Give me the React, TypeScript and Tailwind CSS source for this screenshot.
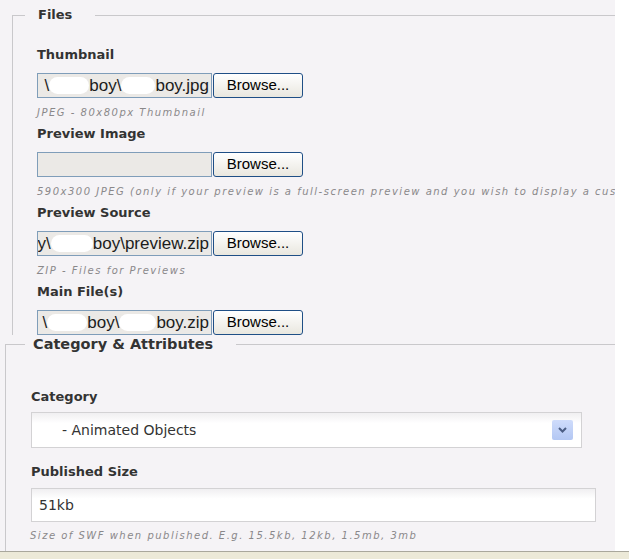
const label = "font-['DejaVu_Sans',sans-serif] font-bold text-[13px] leading-[18px] text-[#333333]";
const hint =
  "font-['DejaVu_Sans',sans-serif] italic text-[10px] leading-[14px] tracking-[1.5px] text-[#8a888a] whitespace-nowrap";

function Blob({ w }: { w: string }) {
  return <span className={`inline-block shrink-0 h-[17px] bg-white rounded-full ${w}`} />;
}

function FileRow({ children }: { children: React.ReactNode }) {
  return (
    <div className="flex h-[25px]">
      <div className="w-[175px] h-[25px] border border-[#7f9db9] bg-[#ebe9e6] overflow-hidden flex justify-end items-center whitespace-nowrap pr-[2px] font-['Liberation_Sans',sans-serif] text-[17px] text-[#1c1c1c]">
        {children}
      </div>
      <button className="w-[90px] h-[25px] ml-[1px] rounded-[3px] border border-[#1f4f86] bg-linear-to-b from-white to-[#e9e7df] font-['Liberation_Sans',sans-serif] text-[15px] text-black">
        Browse...
      </button>
    </div>
  );
}

function FileField({
  title,
  note,
  first,
  children,
}: {
  title: string;
  note?: string;
  first?: boolean;
  children?: React.ReactNode;
}) {
  return (
    <div className={first ? "" : "mt-[5px]"}>
      <div className={`${label} mb-[9px]`}>{title}</div>
      <FileRow>{children}</FileRow>
      {note && <div className={`${hint} mt-[8px]`}>{note}</div>}
    </div>
  );
}

export default function App() {
  return (
    <div className="w-[629px] h-[559px] bg-white flex flex-col overflow-hidden">
      <div className="h-[551px] w-[615px] bg-[#f5f3f6] overflow-hidden">
        <fieldset className="ml-[12px] mt-[6px] border-t border-l border-[#c9c8cb] pl-[24px] pb-0">
          <legend className={`${label} -ml-[12px] pl-[13px] pr-[23px]`}>Files</legend>
          <div className="pt-[22px]">
            <FileField title="Thumbnail" note="JPEG - 80x80px Thumbnail" first>
              <span>\</span>
              <Blob w="w-[40px]" />
              <span>boy\</span>
              <Blob w="w-[34px]" />
              <span>boy.jpg</span>
            </FileField>
            <FileField
              title="Preview Image"
              note="590x300 JPEG (only if your preview is a full-screen preview and you wish to display a custom image)"
            />
            <FileField title="Preview Source" note="ZIP - Files for Previews">
              <span className="shrink-0">boy\</span>
              <Blob w="w-[42px]" />
              <span className="shrink-0">boy\preview.zip</span>
            </FileField>
            <FileField title="Main File(s)">
              <span>\</span>
              <Blob w="w-[40px]" />
              <span>boy\</span>
              <Blob w="w-[37px]" />
              <span>boy.zip</span>
            </FileField>
          </div>
        </fieldset>

        <fieldset className="ml-[5px] border-t border-l border-[#c9c8cb] pl-[25px] h-[216px]">
          <legend
            className={`font-['DejaVu_Sans',sans-serif] font-bold text-[14.5px] leading-[18px] text-[#333333] -ml-[6px] pl-[8px] pr-[23px]`}
          >
            Category &amp; Attributes
          </legend>
          <div className={`${label} mt-[35px]`}>Category</div>
          <div className="mt-[6px] w-[551px] h-[36px] border border-[#d3d2d4] bg-linear-to-b from-[#f0eff1] via-white via-[30%] to-white flex items-center justify-between pl-[30px] pr-[8px]">
            <span className="font-['DejaVu_Sans',sans-serif] text-[14px] text-[#333333]">- Animated Objects</span>
            <span className="w-[21px] h-[20px] rounded-[2px] bg-linear-to-b from-[#cfdcfb] to-[#b3c7f3] flex items-center justify-center">
              <svg width="9" height="6" viewBox="0 0 9 6">
                <polyline points="1,1 4.5,4.5 8,1" fill="none" stroke="#4b5d84" strokeWidth="2" />
              </svg>
            </span>
          </div>
          <div className={`${label} mt-[15px]`}>Published Size</div>
          <div className="mt-[7px] w-[565px] h-[34px] border border-[#d3d2d4] bg-linear-to-b from-[#f0eff1] via-white via-[30%] to-white flex items-center pl-[7px]">
            <span className="font-['DejaVu_Sans',sans-serif] text-[14px] text-[#333333]">51kb</span>
          </div>
          <div className={`${hint} mt-[7px] -ml-[1px]`}>Size of SWF when published. E.g. 15.5kb, 12kb, 1.5mb, 3mb</div>
        </fieldset>
      </div>
      <div className="flex-1 border-t border-[#a9a79c] bg-[#ece9d8]" />
    </div>
  );
}
